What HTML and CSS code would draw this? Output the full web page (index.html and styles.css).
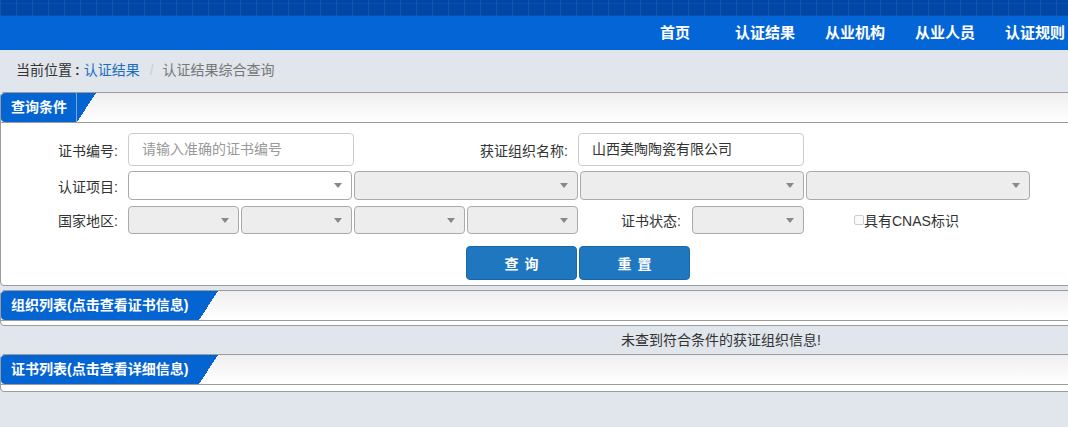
FILE: index.html
```html
<!DOCTYPE html>
<html lang="zh-CN">
<head>
<meta charset="utf-8">
<title>认证结果综合查询</title>
<link rel="stylesheet" href="styles.css">
</head>
<body>
<div class="page">
  <div class="topband"></div>
  <nav class="nav">
    <a class="nav-item">首页</a>
    <a class="nav-item">认证结果</a>
    <a class="nav-item">从业机构</a>
    <a class="nav-item">从业人员</a>
    <a class="nav-item">认证规则</a>
  </nav>
  <div class="crumb">
    <span class="crumb-label">当前位置</span><span class="crumb-colon">:</span><a class="crumb-link">认证结果</a><span class="crumb-sep">/</span><span class="crumb-cur">认证结果综合查询</span>
  </div>

  <section class="panel">
    <div class="panel-head"><span class="tab tab-sep">查询条件</span><span class="tab-tip"></span></div>
    <div class="panel-body form">
      <div class="row row1">
        <label class="lbl lbl1">证书编号:</label>
        <div class="input placeholder">请输入准确的证书编号</div>
        <label class="lbl lbl2">获证组织名称:</label>
        <div class="input">山西美陶陶瓷有限公司</div>
      </div>
      <div class="row row2">
        <label class="lbl lbl1">认证项目:</label>
        <div class="sels">
          <div class="sel wide"></div>
          <div class="sel wide off"></div>
          <div class="sel wide off"></div>
          <div class="sel wide off"></div>
        </div>
      </div>
      <div class="row row3">
        <label class="lbl lbl1">国家地区:</label>
        <div class="sels">
          <div class="sel off"></div>
          <div class="sel off"></div>
          <div class="sel off"></div>
          <div class="sel off"></div>
        </div>
        <label class="lbl lbl3">证书状态:</label>
        <div class="sel off status"></div>
        <label class="chk"><span class="box"></span>具有CNAS标识</label>
      </div>
      <div class="btns">
        <button class="btn">查询</button>
        <button class="btn">重置</button>
      </div>
    </div>
  </section>

  <section class="panel panel-org">
    <div class="panel-head"><span class="tab">组织列表(点击查看证书信息)</span><span class="tab-tip"></span></div>
    <div class="panel-body thin"></div>
  </section>
  <div class="msg">未查到符合条件的获证组织信息!</div>
  <section class="panel">
    <div class="panel-head"><span class="tab">证书列表(点击查看详细信息)</span><span class="tab-tip"></span></div>
    <div class="panel-body thin2"></div>
  </section>
</div>
</body>
</html>
```

FILE: styles.css
```css
html, body {
  margin: 0;
  padding: 0;
}
body {
  background: #e1e5ec;
  overflow: hidden;
  font-family: "Liberation Sans", "Noto Sans CJK SC", sans-serif;
  font-size: 14px;
  color: #333;
}
.page {
  width: 1442px;
}
.topband {
  height: 16px;
  background-color: #0046a6;
  background-image:
    repeating-linear-gradient(90deg, rgba(255,255,255,0.07) 0 1px, transparent 1px 16px),
    repeating-linear-gradient(0deg, rgba(255,255,255,0.05) 0 1px, transparent 1px 12px);
}
.nav {
  height: 34px;
  background: #0466d6;
  display: flex;
  justify-content: flex-end;
  padding-right: 362px;
}
.nav-item {
  width: 90px;
  text-align: center;
  color: #fff;
  font-weight: bold;
  font-size: 15px;
  line-height: 34px;
}
.crumb {
  height: 42px;
  line-height: 40px;
  padding-left: 16px;
  font-size: 14px;
}
.crumb-label { color: #333; }
.crumb-colon { color: #333; margin: 0 4px 0 3px; font-weight: bold; }
.crumb-link { color: #1a6fc0; }
.crumb-sep { color: #ccc; margin: 0 9px 0 10px; }
.crumb-cur { color: #777; }

.panel {
  border: 1px solid #9c9c9c;
  border-radius: 4px;
  background: #fff;
}
.panel-head {
  height: 29px;
  border-bottom: 1px solid #9c9c9c;
  background: linear-gradient(#efefef, #ffffff);
  display: flex;
}
.tab {
  background: #0464d2;
  color: #fff;
  font-weight: bold;
  font-size: 14px;
  line-height: 29px;
  padding: 0 11px 0 10px;
  border-radius: 4px 0 0 4px;
}
.tab-sep {
  border-right: 1px solid #7ea8dc;
  padding-right: 9px;
}
.tab-tip {
  width: 19px;
  background: linear-gradient(to bottom right, #0464d2 50%, transparent 50%);
}
.panel-body.form {
  padding: 10px 0 5px 0;
}
.row {
  display: flex;
  align-items: center;
}
.row1 { height: 33px; }
.row2 { height: 29px; margin-top: 5px; }
.row3 { height: 28px; margin-top: 6px; }
.lbl {
  text-align: right;
  color: #333;
  font-size: 14px;
  flex: none;
}
.lbl1 { width: 117px; margin-right: 10px; }
.lbl2 { width: 214px; margin-right: 10px; }
.lbl3 { width: 103px; margin-right: 11px; }
.input {
  width: 198px;
  height: 31px;
  line-height: 31px;
  border: 1px solid #ccc;
  border-radius: 4px;
  padding: 0 13px;
  font-size: 14px;
  color: #333;
  flex: none;
}
.input.placeholder { color: #999; }
.sels {
  display: flex;
  gap: 2px;
}
.sel {
  width: 100px;
  height: 26px;
  border: 1px solid #aaa;
  border-radius: 4px;
  background: #fff;
  display: flex;
  justify-content: flex-end;
  align-items: center;
  padding-right: 9px;
  flex: none;
}
.sel::after {
  content: "";
  border-left: 4px solid transparent;
  border-right: 4px solid transparent;
  border-top: 5px solid #888;
}
.sel.wide { width: 213px; }
.row2 .sel { height: 27px; }
.sel.off { background: #ededed; }
.sel.status { width: 101px; }
.chk {
  display: flex;
  align-items: center;
  margin-left: 50px;
  font-size: 14px;
  color: #333;
}
.box {
  width: 10px;
  height: 10px;
  border: 1px solid #ccc;
  border-radius: 2px;
  background: #fafafa;
  box-sizing: border-box;
}
.btns {
  display: flex;
  gap: 2px;
  margin-top: 12px;
  padding-left: 465px;
}
.btn {
  width: 111px;
  height: 34px;
  background: #1f77c0;
  border: 1px solid #1a68a8;
  border-radius: 4px;
  color: #fff;
  font-family: "Liberation Sans", "Noto Sans CJK SC", sans-serif;
  font-size: 14px;
  font-weight: bold;
  letter-spacing: 6px;
  padding: 0 0 0 6px;
}
.panel-org { margin-top: 4px; }
.panel-body.thin { height: 4px; }
.panel-body.thin2 { height: 6px; }
.msg {
  height: 28px;
  line-height: 28px;
  text-align: center;
  font-size: 14px;
  color: #333;
}
```
